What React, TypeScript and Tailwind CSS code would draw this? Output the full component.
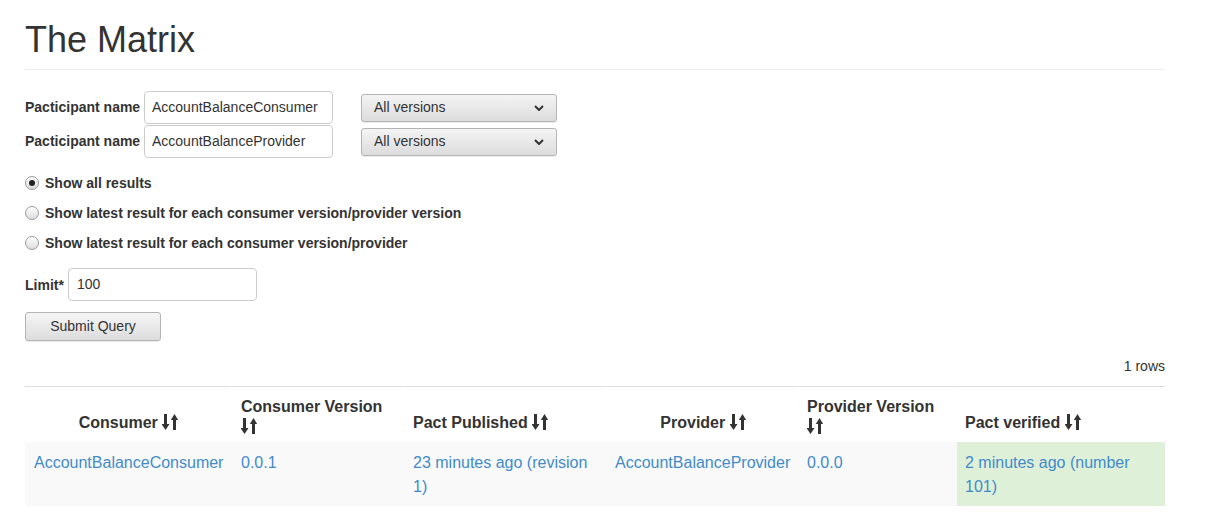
import React from "react";

const SortIcon = () => (
  <svg
    viewBox="0 0 16 16"
    className="inline-block w-[16px] h-[16px] align-[-2px]"
    fill="#333333"
  >
    <path d="M2 0h3v10h2.5l-4 6l-4-6h2.5z" />
    <path d="M11 16h3V6h2.2l-3.7-6l-3.7 6H11z" />
  </svg>
);

const Radio = ({ checked, label }: { checked?: boolean; label: string }) => (
  <label className="flex items-center h-[30px] font-bold text-[14px] text-[#333]">
    <span className="relative w-[14px] h-[14px] rounded-full border border-[#9a9a9a] bg-gradient-to-b from-white to-[#dcdcdc] mr-[6px] flex items-center justify-center shrink-0">
      {checked && <span className="w-[6px] h-[6px] rounded-full bg-[#222]" />}
    </span>
    {label}
  </label>
);

const Select = () => (
  <div className="w-[196px] h-[28px] rounded-[3px] border border-[#b4b4b4] bg-gradient-to-b from-[#f4f4f4] to-[#dcdcdc] flex items-center justify-between pl-[12px] pr-[12px] text-[14px] text-[#333] shadow-[0_1px_0_rgba(0,0,0,0.08)]">
    <span>All versions</span>
    <svg viewBox="0 0 10 6" className="w-[10px] h-[6px]" fill="none" stroke="#333" strokeWidth="2">
      <path d="M1 1l4 4l4-4" />
    </svg>
  </div>
);

const ParticipantRow = ({ value }: { value: string }) => (
  <div className="flex items-center h-[33px]">
    <span className="font-bold text-[14px] text-[#333] w-[119px]">Pacticipant name</span>
    <div className="w-[189px] h-[33px] border border-[#ccc] rounded-[4px] flex items-center pl-[7px] text-[14px] text-[#333] bg-white">
      {value}
    </div>
    <div className="ml-[28px]">
      <Select />
    </div>
  </div>
);

export default function App() {
  return (
    <div
      className="bg-white min-h-[526px] text-[#333]"
      style={{ fontFamily: '"Liberation Sans", Arial, sans-serif' }}
    >
      <div className="ml-[25px] w-[1140px]">
        <h1 className="pt-[20px] pb-[9px] text-[36px] leading-[40px] font-normal border-b border-[#eee]">
          The Matrix
        </h1>

        <div className="mt-[21px] flex flex-col gap-[1px]">
          <ParticipantRow value="AccountBalanceConsumer" />
          <ParticipantRow value="AccountBalanceProvider" />
        </div>

        <div className="mt-[10px] flex flex-col">
          <Radio checked label="Show all results" />
          <Radio label="Show latest result for each consumer version/provider version" />
          <Radio label="Show latest result for each consumer version/provider" />
        </div>

        <div className="mt-[10px] flex items-center h-[33px]">
          <span className="font-bold text-[14px] w-[43px] pt-[1px]">Limit*</span>
          <div className="w-[189px] h-[33px] border border-[#ccc] rounded-[4px] flex items-center pl-[8px] text-[14px] bg-white">
            100
          </div>
        </div>

        <button className="mt-[11px] w-[136px] h-[29px] rounded-[3px] border border-[#b4b4b4] bg-gradient-to-b from-[#f6f6f6] to-[#dcdcdc] text-[14px] text-[#333] shadow-[0_1px_0_rgba(0,0,0,0.08)]">
          Submit Query
        </button>

        <div className="mt-[15px] text-right text-[14px] leading-[20px]">1 rows</div>

        <table className="mt-[10px] w-[1140px] table-fixed border-separate border-spacing-0 text-[16px]">
          <colgroup>
            <col className="w-[206px]" />
            <col className="w-[173px]" />
            <col className="w-[202px]" />
            <col className="w-[192px]" />
            <col className="w-[159px]" />
            <col className="w-[208px]" />
          </colgroup>
          <thead>
            <tr className="font-bold leading-[20px] align-bottom">
              <th className="border-t border-[#ddd] text-center pl-[9px] pr-[8px] pt-[10px] pb-[9px]">
                Consumer <SortIcon />
              </th>
              <th className="border-t border-l border-l-white border-[#ddd] text-left pl-[9px] pr-[8px] pt-[10px] pb-[5px]">
                Consumer Version <SortIcon />
              </th>
              <th className="border-t border-l border-l-white border-[#ddd] text-left pl-[8px] pr-[8px] pt-[10px] pb-[9px]">
                Pact Published <SortIcon />
              </th>
              <th className="border-t border-l border-l-white border-[#ddd] text-center pl-[9px] pr-[8px] pt-[10px] pb-[9px]">
                Provider <SortIcon />
              </th>
              <th className="border-t border-l border-l-white border-[#ddd] text-left pl-[8px] pr-[8px] pt-[10px] pb-[5px]">
                Provider Version <SortIcon />
              </th>
              <th className="border-t border-l border-l-white border-[#ddd] text-left pl-[7px] pr-[8px] pt-[10px] pb-[9px]">
                Pact verified <SortIcon />
              </th>
            </tr>
          </thead>
          <tbody>
            <tr className="leading-[24px] align-top text-[#428bca]">
              <td className="bg-[#f9f9f9] pl-[9px] pr-[8px] pt-[9px] pb-[7px]">AccountBalanceConsumer</td>
              <td className="bg-[#f9f9f9] pl-[10px] pr-[8px] pt-[9px] pb-[7px]">0.0.1</td>
              <td className="bg-[#f9f9f9] pl-[9px] pr-[8px] pt-[9px] pb-[7px]">23 minutes ago (revision 1)</td>
              <td className="bg-[#f9f9f9] pl-[9px] pr-[8px] pt-[9px] pb-[7px]">AccountBalanceProvider</td>
              <td className="bg-[#f9f9f9] pl-[9px] pr-[8px] pt-[9px] pb-[7px]">0.0.0</td>
              <td className="bg-[#dff0d8] pl-[8px] pr-[8px] pt-[9px] pb-[7px]">2 minutes ago (number 101)</td>
            </tr>
          </tbody>
        </table>
      </div>
    </div>
  );
}
